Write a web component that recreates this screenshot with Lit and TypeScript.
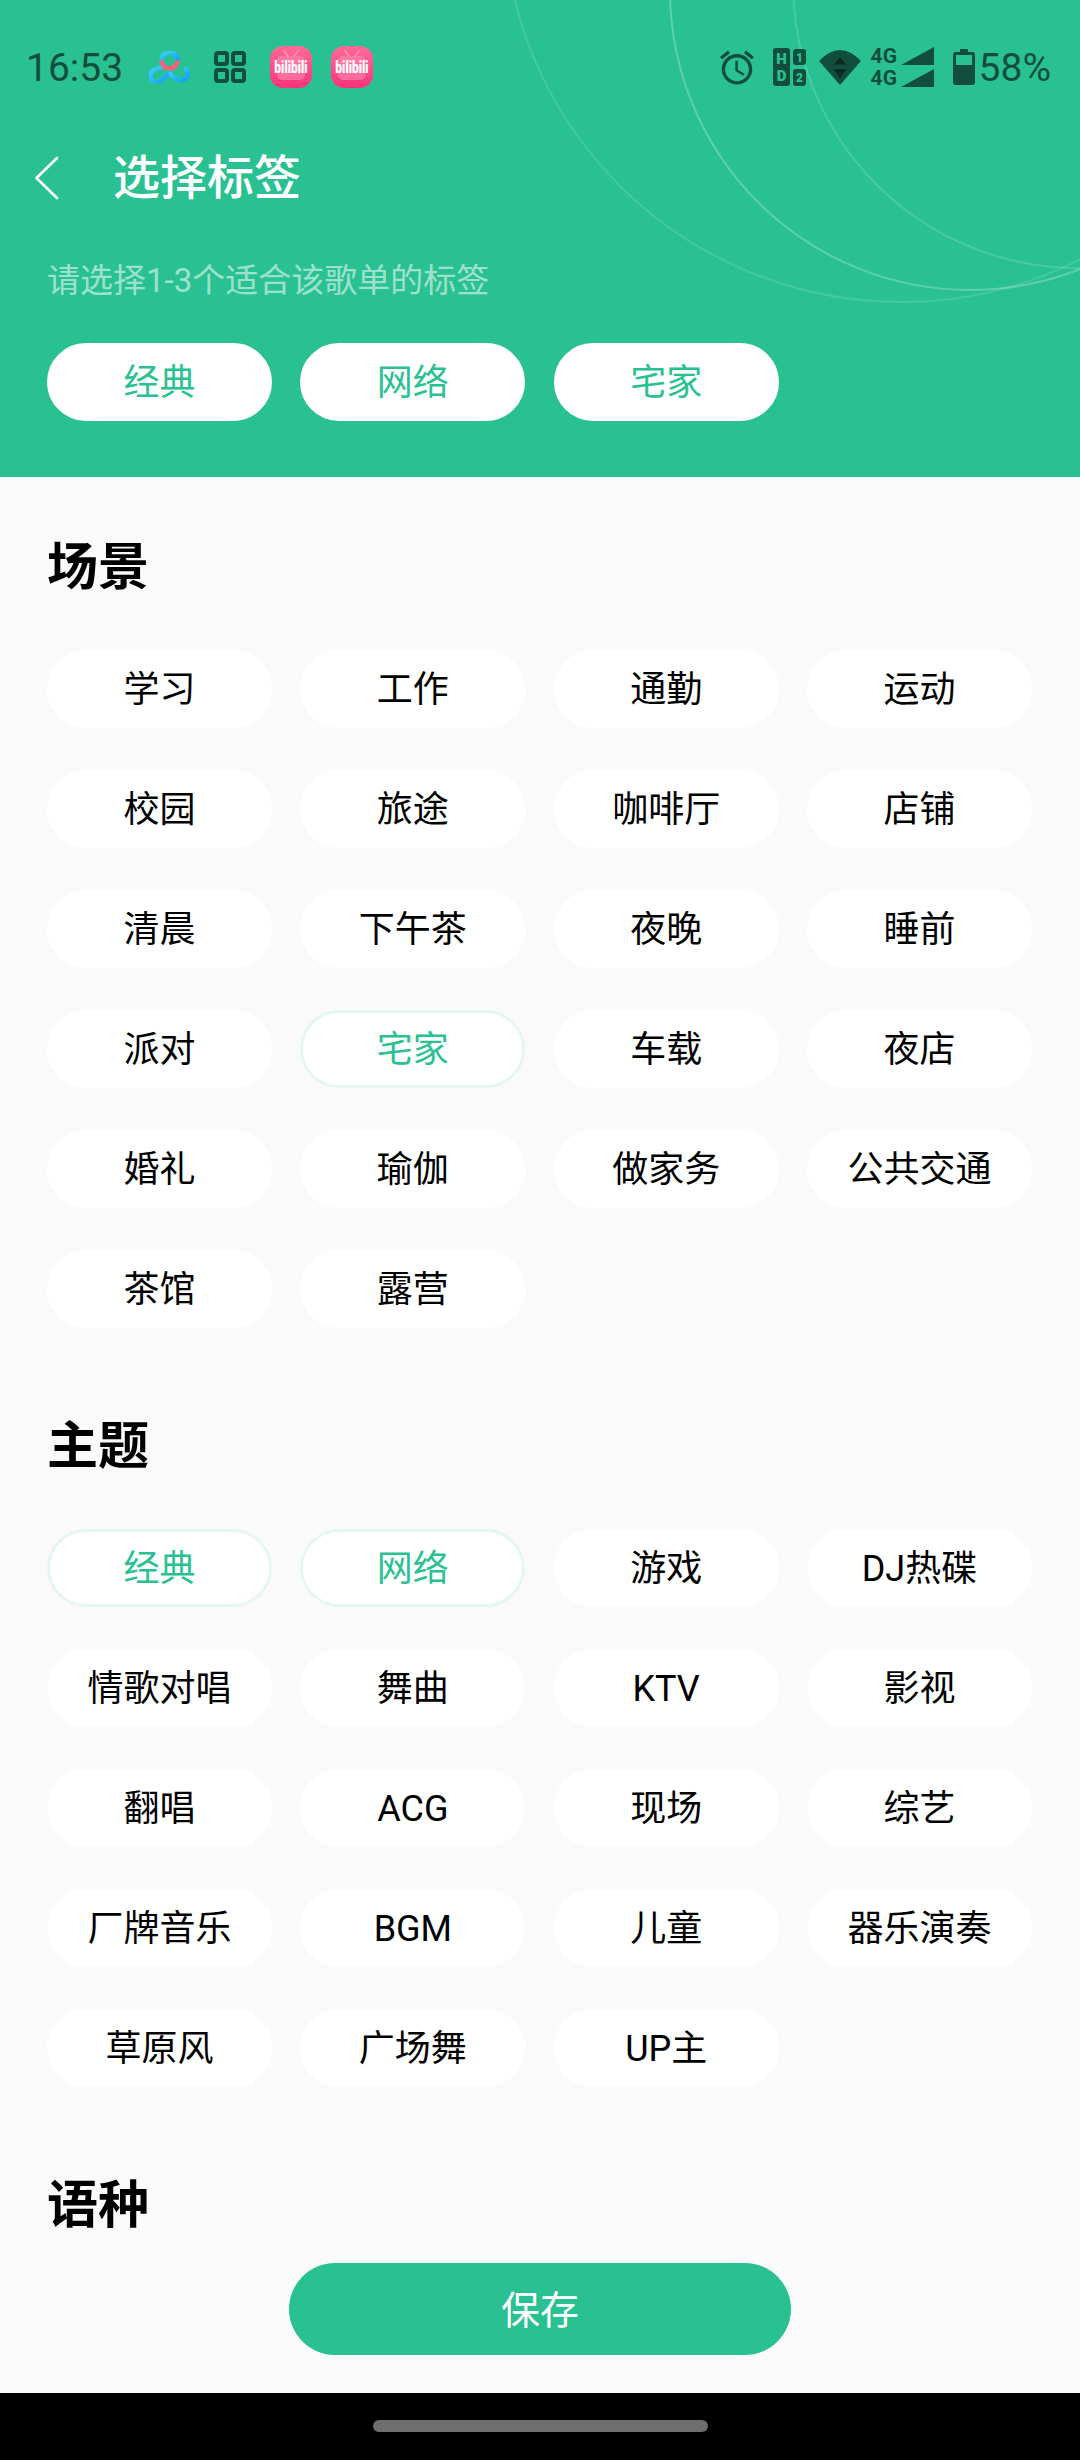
import { html, css, svg, LitElement } from 'lit';
import { customElement, state } from 'lit/decorators.js';

interface TagGroup {
  title: string;
  tags: string[];
}

const GROUPS: TagGroup[] = [
  {
    title: '场景',
    tags: [
      '学习', '工作', '通勤', '运动',
      '校园', '旅途', '咖啡厅', '店铺',
      '清晨', '下午茶', '夜晚', '睡前',
      '派对', '宅家', '车载', '夜店',
      '婚礼', '瑜伽', '做家务', '公共交通',
      '茶馆', '露营',
    ],
  },
  {
    title: '主题',
    tags: [
      '经典', '网络', '游戏', 'DJ热碟',
      '情歌对唱', '舞曲', 'KTV', '影视',
      '翻唱', 'ACG', '现场', '综艺',
      '厂牌音乐', 'BGM', '儿童', '器乐演奏',
      '草原风', '广场舞', 'UP主',
    ],
  },
  { title: '语种', tags: [] },
];

// Small launcher badge used twice in the status bar
const biliIcon = (id: string) => html`
  <svg class="bili" width="42" height="42" viewBox="0 0 42 42">
    <defs>
      <linearGradient id=${id} x1="0" y1="0" x2="0" y2="1">
        <stop offset="0" stop-color="#ff6a98"></stop>
        <stop offset="1" stop-color="#f8337c"></stop>
      </linearGradient>
    </defs>
    <rect width="42" height="42" rx="13" fill="url(#${id})"></rect>
    <path d="M14 5l4 5M28 5l-4 5" stroke="#ff8fb2" stroke-width="2" stroke-linecap="round"></path>
    <rect x="7" y="10" width="28" height="24" rx="5" fill="#ff8fb2" opacity="0.55"></rect>
    <text transform="translate(21 27) scale(1 1.300)" text-anchor="middle"
      font-family="Roboto, sans-serif" font-weight="900" font-size="12" fill="#fff">bilibili</text>
  </svg>
`;

@customElement('app-root')
export class AppRoot extends LitElement {
  @state() private selected: string[] = ['经典', '网络', '宅家'];

  private _toggle(tag: string) {
    if (this.selected.includes(tag)) {
      this.selected = this.selected.filter(t => t !== tag);
    } else if (this.selected.length < 3) {
      this.selected = [...this.selected, tag];
    }
  }

  private renderStatusBar() {
    return html`
      <div class="status">
        <div class="status-left">
          <span class="clock-text">16:53</span>
          <svg class="cloud" width="41" height="32" viewBox="0 0 41 32" fill="none">
            <defs>
              <linearGradient id="cloudBlue" x1="0" y1="0" x2="1" y2="1">
                <stop offset="0" stop-color="#3fd0ff"></stop>
                <stop offset="1" stop-color="#12a0fb"></stop>
              </linearGradient>
            </defs>
            <g stroke="url(#cloudBlue)" stroke-width="4.500" stroke-linecap="round">
              <path d="M12.500 9.500a8 8 0 0 1 16 0"></path>
              <path d="M14 15.500L6 18.500A6.500 6.500 0 1 0 13.500 28L19 22.500"></path>
              <path d="M21.500 22.500C24 27 28 29.500 33 29A6.500 6.500 0 0 0 37 18"></path>
            </g>
            <path d="M12.500 9.500a8 8 0 0 0 16 0" stroke="#fb5f76" stroke-width="4.500"></path>
          </svg>
          <svg class="grid-icon" width="32" height="32" viewBox="0 0 32 32" fill="none">
            <g stroke="#114f3c" stroke-width="4">
              <rect x="2" y="2" width="11" height="11" rx="2"></rect>
              <rect x="19" y="2" width="11" height="11" rx="2"></rect>
              <rect x="2" y="19" width="11" height="11" rx="2"></rect>
              <rect x="19" y="19" width="11" height="11" rx="2"></rect>
            </g>
          </svg>
          ${biliIcon('biliA')} ${biliIcon('biliB')}
        </div>
        <div class="status-right">
          <svg class="alarm" width="34" height="35" viewBox="2 1.860 20 20.140" fill="#114f3c">
            <path d="M22 5.720l-4.600-3.860-1.290 1.530 4.600 3.860L22 5.720zM7.880 3.390L6.600 1.860 2 5.710l1.290 1.530 4.590-3.850zM12.500 8H11v6l4.750 2.850.75-1.230-4-2.370V8zM12 4c-4.970 0-9 4.030-9 9s4.030 9 9 9 9-4.030 9-9-4.030-9-9-9zm0 16c-3.870 0-7-3.130-7-7s3.130-7 7-7 7 3.130 7 7-3.130 7-7 7z"></path>
          </svg>
          <svg class="hd" width="33" height="38" viewBox="0 0 33 38">
            <rect width="17" height="38" rx="3" fill="#114f3c"></rect>
            <rect x="20" y="1" width="13" height="16" rx="3" fill="#114f3c"></rect>
            <rect x="20" y="21" width="13" height="17" rx="3" fill="#114f3c"></rect>
            <g font-family="Roboto, sans-serif" font-weight="900" fill="#2ac192" text-anchor="middle">
              <text x="8.500" y="16" font-size="15">H</text>
              <text x="8.500" y="33" font-size="15">D</text>
              <text x="26.500" y="14" font-size="12">1</text>
              <text x="26.500" y="34" font-size="12">2</text>
            </g>
          </svg>
          <svg class="wifi" width="42" height="35" viewBox="0 0 42 35">
            <path d="M0 11Q21-11 42 11L21 35Z" fill="#114f3c"></path>
            <path d="M21 7l6.500 7.500h-13z" fill="#0a2b21"></path>
            <path d="M14.500 19h13L21 28z" fill="#0a2b21"></path>
          </svg>
          <div class="sim">
            <div class="sim-row">
              <span>4G</span>
              <svg width="33" height="18" viewBox="0 0 33 18"><path d="M0 18L33 0v18z" fill="#114f3c"></path></svg>
            </div>
            <div class="sim-row">
              <span>4G</span>
              <svg width="33" height="18" viewBox="0 0 33 18"><path d="M0 18L33 0v18z" fill="#114f3c"></path></svg>
            </div>
          </div>
          <svg class="battery" width="22" height="36" viewBox="0 0 22 36">
            <path d="M7 0h8v3h4a3 3 0 0 1 3 3v27a3 3 0 0 1-3 3H3a3 3 0 0 1-3-3V6a3 3 0 0 1 3-3h4z" fill="#114f3c"></path>
            <rect x="3" y="6" width="16" height="10" fill="#2ac192"></rect>
          </svg>
          <span class="percent">58%</span>
        </div>
      </div>
    `;
  }

  private renderHeader() {
    return html`
      <header class="header">
        <svg class="rings" width="1080" height="477" viewBox="0 0 1080 477" fill="none" stroke="#fff">
          ${svg`
            <circle cx="970" cy="-10" r="300" stroke-opacity="0.24" stroke-width="2"></circle>
            <circle cx="901" cy="-96" r="398" stroke-opacity="0.12" stroke-width="2"></circle>
            <circle cx="1078" cy="-17" r="285" stroke-opacity="0.14" stroke-width="2"></circle>
          `}
        </svg>
        ${this.renderStatusBar()}
        <div class="nav">
          <svg class="back" width="25" height="44" viewBox="0 0 25 44" fill="none">
            <path d="M23 2L2.500 22 23 42" stroke="#fff" stroke-width="2.600" stroke-linecap="round" stroke-linejoin="round"></path>
          </svg>
          <h1>选择标签</h1>
        </div>
        <p class="hint">请选择1-3个适合该歌单的标签</p>
        <div class="tag-grid picked">
          ${this.selected.map(tag => html`<button class="chip on-brand" @click=${() => this._toggle(tag)}>${tag}</button>`)}
        </div>
      </header>
    `;
  }

  private renderGroup(group: TagGroup) {
    return html`
      <section class="group">
        <h2>${group.title}</h2>
        ${group.tags.length
          ? html`<div class="tag-grid">
              ${group.tags.map(
                tag => html`<button
                  class="chip ${this.selected.includes(tag) ? 'active' : ''}"
                  @click=${() => this._toggle(tag)}
                >
                  ${tag}
                </button>`,
              )}
            </div>`
          : ''}
      </section>
    `;
  }

  render() {
    return html`
      ${this.renderHeader()}
      <main class="list">${GROUPS.map(group => this.renderGroup(group))}</main>
      <div class="footer"><button class="save">保存</button></div>
      <div class="gesture-bar"><span class="handle"></span></div>
    `;
  }

  static styles = css`
    :host {
      display: flex;
      flex-direction: column;
      width: 1080px;
      height: 2460px;
      overflow: hidden;
      background: #fafafa;
      font-family: Roboto, 'Noto Sans CJK SC', sans-serif;
      color: #000;
    }

    .header {
      position: relative;
      flex: none;
      height: 477px;
      box-sizing: border-box;
      overflow: hidden;
      background: #2ac192;
    }

    .rings {
      position: absolute;
      top: 0;
      left: 0;
    }

    .status {
      position: relative;
      display: flex;
      justify-content: space-between;
      align-items: center;
      height: 134px;
      padding: 0 29px 0 26px;
      box-sizing: border-box;
      color: #114f3c;
    }

    .status-left,
    .status-right {
      display: flex;
      align-items: center;
    }

    .clock-text,
    .percent {
      padding-top: 2px;
      font-size: 39px;
      line-height: 44px;
    }

    .cloud {
      margin-left: 26px;
    }

    .grid-icon {
      margin-left: 24px;
      filter: blur(0.4px);
    }

    .bili {
      margin-left: 24px;
    }

    .bili + .bili {
      margin-left: 19px;
    }

    .hd {
      margin-left: 19px;
    }

    .wifi {
      margin-left: 13px;
    }

    .sim {
      display: flex;
      flex-direction: column;
      gap: 4px;
      margin-left: 10px;
    }

    .sim-row {
      display: flex;
      align-items: flex-end;
      gap: 2px;
      height: 18px;
      font-size: 21px;
      font-weight: 700;
      line-height: 18px;
    }

    .sim-row span {
      width: 28px;
    }

    .battery {
      margin-left: 19px;
    }

    .percent {
      margin-left: 4px;
    }

    .nav {
      position: relative;
      display: flex;
      align-items: center;
      height: 88px;
      padding-left: 34px;
    }

    h1 {
      margin: 0 0 0 54px;
      font-size: 47px;
      font-weight: 500;
      line-height: 64px;
      color: #fff;
    }

    .hint {
      position: relative;
      margin: 36px 0 0 47px;
      font-size: 33px;
      line-height: 46px;
      color: rgba(255, 255, 255, 0.55);
    }

    .tag-grid {
      display: grid;
      grid-template-columns: repeat(4, 225px);
      column-gap: 28.33px;
      row-gap: 42px;
    }

    .picked {
      position: relative;
      margin: 39px 0 0 47px;
    }

    .list {
      flex: 1;
      min-height: 0;
      overflow: hidden;
      padding: 56px 47px 0;
      display: flex;
      flex-direction: column;
      gap: 84px;
    }

    h2 {
      margin: 0 0 47px;
      font-size: 51px;
      font-weight: 700;
      line-height: 70px;
    }

    .chip {
      display: flex;
      align-items: center;
      justify-content: center;
      height: 78px;
      padding: 2px 0 0;
      box-sizing: border-box;
      border: 3px solid #fff;
      border-radius: 39px;
      background: #fff;
      color: #000;
      font: inherit;
      font-size: 36px;
      line-height: 48px;
    }

    .chip.active {
      border-color: #e6f7f1;
      color: #2ac192;
    }

    .chip.on-brand {
      color: #2ac192;
    }

    .footer {
      flex: none;
      display: flex;
      justify-content: center;
      padding: 23px 0 38px;
      background: #fafafa;
    }

    .save {
      width: 502px;
      height: 92px;
      padding: 3px 0 0;
      border: 0;
      border-radius: 46px;
      background: #2ac192;
      color: #fff;
      font: inherit;
      font-size: 39px;
      line-height: 52px;
    }

    .gesture-bar {
      flex: none;
      display: flex;
      justify-content: center;
      height: 67px;
      padding-top: 27px;
      box-sizing: border-box;
      background: #000;
    }

    .handle {
      width: 335px;
      height: 12px;
      border-radius: 6px;
      background: #6e6e6e;
    }
  `;
}
